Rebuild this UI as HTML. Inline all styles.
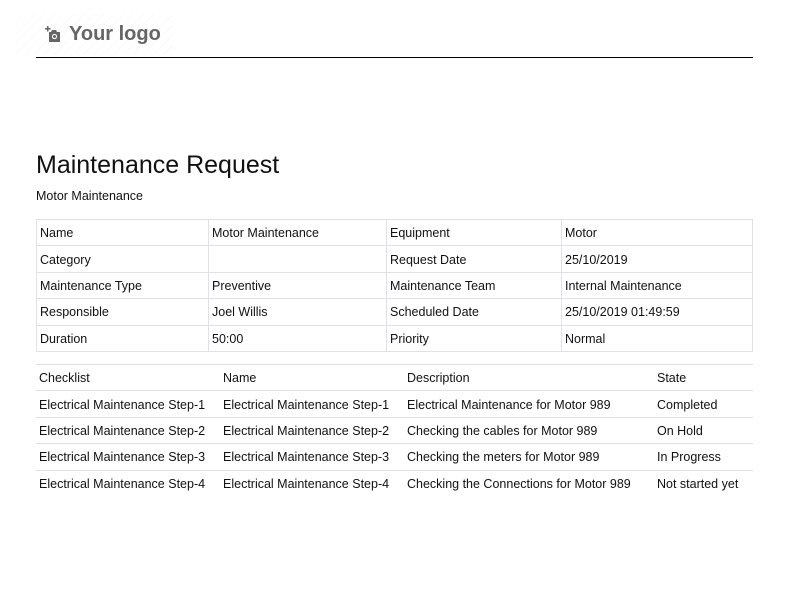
<!DOCTYPE html>
<html><head><meta charset="utf-8"><style>
*{margin:0;padding:0;box-sizing:border-box}
body{width:786px;height:597px;background:#fff;font-family:"Liberation Sans",sans-serif;color:#111;position:relative;overflow:hidden}
.a{position:absolute;white-space:nowrap;font-size:12.5px}
.logo{position:absolute;left:16px;top:14px;width:156px;height:40px;background:repeating-linear-gradient(135deg,#fff 0 6px,#f9f9f9 6px 7px)}
.hr{position:absolute;left:36px;top:57px;width:717px;height:1px;background:#000}
table{position:absolute;border-collapse:collapse;font-size:12.5px}
.t1{left:36px;top:219px;width:717px}
.t1 td{border:1px solid #dee2e6;height:26.4px;padding:1px 0 0 3px;vertical-align:middle}
.t2{left:36px;top:364px;width:717px}
.t2 td{border-top:1px solid #dee2e6;height:26.4px;padding:1px 0 0 3px;vertical-align:middle}
</style></head><body>
<div class="logo"></div>
<svg style="position:absolute;left:44px;top:26px" width="18" height="17" viewBox="0 0 18 17"><path d="M3 0v2H1v1.5h2v2h1.5v-2h2V2h-2V0z" fill="#666"/><path d="M5 6h2l1-2h4l1 2h3v10H5z" fill="#666"/><circle cx="10.5" cy="10.5" r="2.6" fill="#fff"/><circle cx="10.5" cy="10.5" r="1.5" fill="#666"/></svg>
<div class="a" style="left:69px;top:23px;font-size:20px;font-weight:bold;color:#666">Your logo</div>
<div class="hr"></div>
<div class="a" style="left:36px;top:151px;font-size:25px;color:#111">Maintenance Request</div>
<div class="a" style="left:36px;top:189px;font-size:12.5px">Motor Maintenance</div>
<table class="t1">
<colgroup><col style="width:172px"><col style="width:178px"><col style="width:175px"><col></colgroup>
<tr><td>Name</td><td>Motor Maintenance</td><td>Equipment</td><td>Motor</td></tr>
<tr><td>Category</td><td></td><td>Request Date</td><td>25/10/2019</td></tr>
<tr><td>Maintenance Type</td><td>Preventive</td><td>Maintenance Team</td><td>Internal Maintenance</td></tr>
<tr><td>Responsible</td><td>Joel Willis</td><td>Scheduled Date</td><td>25/10/2019 01:49:59</td></tr>
<tr><td>Duration</td><td>50:00</td><td>Priority</td><td>Normal</td></tr>
</table>
<table class="t2">
<colgroup><col style="width:184px"><col style="width:184px"><col style="width:250px"><col></colgroup>
<tr><td>Checklist</td><td>Name</td><td>Description</td><td>State</td></tr>
<tr><td>Electrical Maintenance Step-1</td><td>Electrical Maintenance Step-1</td><td>Electrical Maintenance for Motor 989</td><td>Completed</td></tr>
<tr><td>Electrical Maintenance Step-2</td><td>Electrical Maintenance Step-2</td><td>Checking the cables for Motor 989</td><td>On Hold</td></tr>
<tr><td>Electrical Maintenance Step-3</td><td>Electrical Maintenance Step-3</td><td>Checking the meters for Motor 989</td><td>In Progress</td></tr>
<tr><td>Electrical Maintenance Step-4</td><td>Electrical Maintenance Step-4</td><td>Checking the Connections for Motor 989</td><td>Not started yet</td></tr>
</table>
</body></html>
